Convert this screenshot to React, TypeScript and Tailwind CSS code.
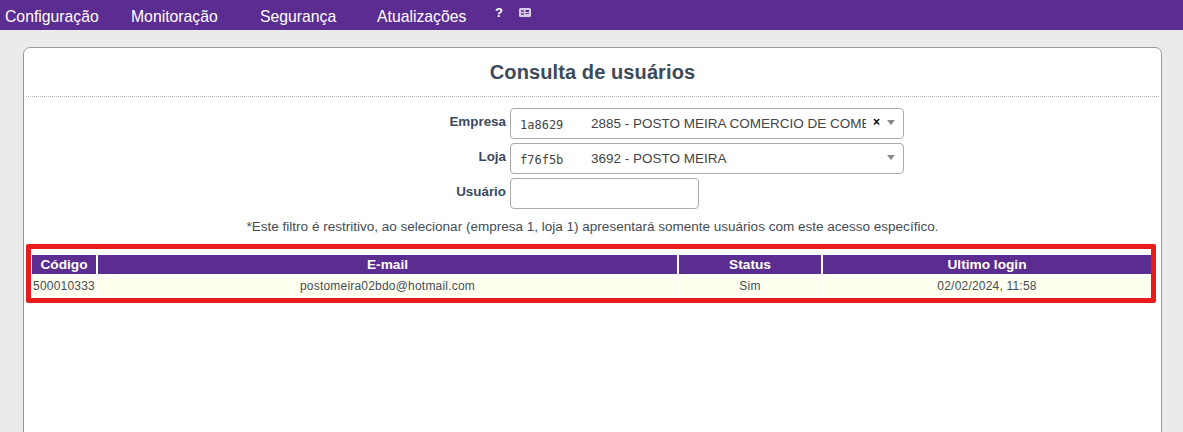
import React from 'react'

const menu = [
  { label: 'Configuração', width: 'w-[126px]' },
  { label: 'Monitoração', width: 'w-[129px]' },
  { label: 'Segurança', width: 'w-[117px]' },
  { label: 'Atualizações', width: 'w-[117px]' },
]

const Caret = () => (
  <span className="ml-auto mr-[8px] -mt-[2px] w-0 h-0 border-x-[4px] border-x-transparent border-t-[5px] border-t-[#888888]" />
)

const FormRow = ({ label, children }: { label: string; children: React.ReactNode }) => (
  <div className="flex items-center h-[31px] mb-[4px]">
    <label className="w-[506px] text-right font-bold text-[13.4px] text-[#3b4a5c] -mt-[3px]">{label}</label>
    <div className="ml-[4px]">{children}</div>
  </div>
)

const SelectBox = ({ code, text, clear }: { code: string; text: string; clear?: boolean }) => (
  <div className="w-[394px] h-[31px] border border-[#aaaaaa] rounded-[4px] bg-white flex items-center text-[13.5px] text-[#444444]">
    <span className="ml-[9px] mt-[2px] w-[71px] shrink-0 text-[12px] font-['DejaVu_Sans_Mono',monospace]">{code}</span>
    <span className="mt-[2px] w-[275px] shrink-0 overflow-hidden whitespace-nowrap">{text}</span>
    {clear && <span className="ml-[7px] -mt-[3px] text-[12px] leading-none font-bold text-black">×</span>}
    <Caret />
  </div>
)

const headCell = 'h-[19px] leading-[19px] bg-[#5c2d91] text-white font-bold text-[13.7px]'
const bodyCell = 'h-[20px] leading-[20px] bg-[#fffff0] text-[12px] text-[#444c56] tracking-[0.2px]'

export default function App() {
  return (
    <div className="h-[432px] overflow-hidden bg-[#ebebeb] font-['Liberation_Sans',Arial,sans-serif]">
      {/* menu */}
      <nav className="h-[30px] bg-[#5c2d91] flex items-center pl-[5px] pt-[3px] text-white text-[15.75px]">
        {menu.map((m) => (
          <span key={m.label} className={`${m.width} shrink-0`}>{m.label}</span>
        ))}
        <span className="w-[24px] ml-[1px] -mt-[9px] text-[13px] leading-none font-bold">?</span>
        <svg width="12" height="9" viewBox="0 0 12 9" className="-mt-[9px]" fill="none">
          <rect width="12" height="9" rx="1.5" fill="#d9cde8" />
          <rect x="2" y="2" width="3" height="2" fill="#7d57a8" />
          <rect x="2" y="5" width="3" height="2" fill="#7d57a8" />
          <rect x="6.5" y="2" width="3.5" height="2" fill="#5c2d91" />
          <rect x="6.5" y="5" width="3.5" height="1" fill="#5c2d91" />
        </svg>
      </nav>

      <div className="pt-[17px] px-[23px]">
        <div className="w-[1139px] h-[400px] bg-white border border-[#999999] rounded-t-[7px]">
          <h1 className="h-[49px] mx-[2px] flex items-center justify-center border-b border-dotted border-[#b5b5b5] text-[20px] font-bold text-[#3b4a5c] tracking-[0.1px]">
            Consulta de usuários
          </h1>

          <div className="pt-[11px] -ml-[24px]">
            <FormRow label="Empresa">
              <SelectBox code="1a8629" text="2885 - POSTO MEIRA COMERCIO DE COMBUSTIVEIS" clear />
            </FormRow>
            <FormRow label="Loja">
              <SelectBox code="f76f5b" text="3692 - POSTO MEIRA" />
            </FormRow>
            <FormRow label="Usuário">
              <div className="w-[189px] h-[31px] border border-[#aaaaaa] rounded-[4px] bg-white" />
            </FormRow>
          </div>

          <p className="mt-[7px] text-center text-[13.53px] leading-[21px] text-[#444c56]">
            *Este filtro é restritivo, ao selecionar (empresa 1, loja 1) apresentará somente usuários com este acesso específico.
          </p>

          {/* destaque vermelho em volta da tabela */}
          <div className="mt-[7px] ml-[2px] w-[1130px] h-[59px] border-[5px] border-[#e81c1c] rounded-[2px] pt-[6px] pl-[1px]">
            <div className="grid grid-cols-[64px_579px_142px_328px] gap-[2px] text-center">
              <div className={headCell}>Código</div>
              <div className={headCell}>E-mail</div>
              <div className={headCell}>Status</div>
              <div className={headCell}>Ultimo login</div>
              <div className={bodyCell}>500010333</div>
              <div className={bodyCell}>postomeira02bdo@hotmail.com</div>
              <div className={bodyCell}>Sim</div>
              <div className={bodyCell}>02/02/2024, 11:58</div>
            </div>
          </div>
        </div>
      </div>
    </div>
  )
}
